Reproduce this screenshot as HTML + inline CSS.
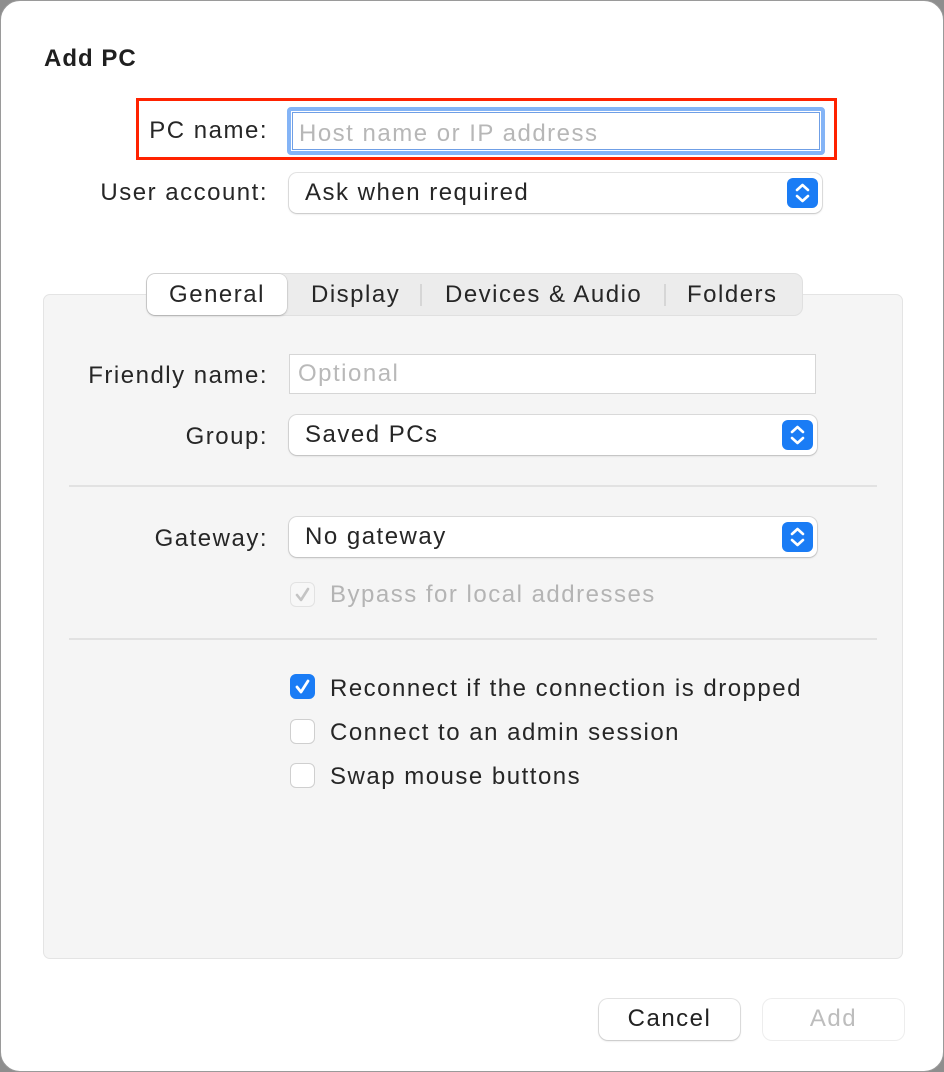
<!DOCTYPE html>
<html><head><style>
*{box-sizing:border-box;margin:0;padding:0}
html,body{width:944px;height:1072px;background:#8e8e8e;overflow:hidden;font-family:"Liberation Sans",sans-serif;color:#222}
.win{position:absolute;left:0;top:0;width:944px;height:1072px;background:#fff;border-radius:20px;border:1px solid #9a9a9a}
.a{position:absolute}
.s{letter-spacing:1.5px}
.lbl{position:absolute;font-size:24px;text-align:right;color:#262626;letter-spacing:1.5px}
.pop{position:absolute;background:#fff;border-radius:8px;box-shadow:0 0 0 1px rgba(0,0,0,.1),0 1px 2px rgba(0,0,0,.15);font-size:24px;padding-left:16px;line-height:40px;color:#262626;letter-spacing:1.5px}
.chev{position:absolute;right:4px;top:5px;width:31px;height:30px;background:#1a7cf5;border-radius:6px}
.tf{position:absolute;background:#fff;border:1px solid #d6d6d6;font-size:24px;padding-left:8px;color:#b9b9b9;letter-spacing:1.5px}
.cb{position:absolute;width:25px;height:25px;border-radius:6px;background:#fff;border:1px solid #cfcfcf}
.ct{position:absolute;font-size:24px;color:#262626;left:329px;letter-spacing:1.5px}
.sep{position:absolute;left:68px;width:808px;height:2px;background:#e2e2e2}
.btn{position:absolute;width:141px;height:41px;border-radius:9px;background:#fff;box-shadow:0 0 0 1px rgba(0,0,0,.1),0 1px 2px rgba(0,0,0,.15);font-size:24px;text-align:center;line-height:40px;letter-spacing:1.5px}
</style></head><body>
<div class="win">
<div class="a" style="left:43px;top:44px;font-size:24px;font-weight:bold;color:#1f1f1f;letter-spacing:1px">Add PC</div>
<div class="a" style="left:135px;top:97px;width:701px;height:62px;border:3px solid #ff2200"></div>
<div class="lbl" style="right:675px;top:116px">PC name:</div>
<div class="a" style="left:286px;top:106px;width:538px;height:48px;border:4px solid #84b4f6;border-radius:4px;background:#fff"><div style="position:absolute;left:1px;top:1px;right:1px;bottom:1px;border:1px solid #6f9fe6"></div><div style="position:absolute;left:8px;top:9px;font-size:24px;color:#b7b7b7;letter-spacing:1.5px">Host name or IP address</div></div>
<div class="lbl" style="right:675px;top:178px">User account:</div>
<div class="pop" style="left:288px;top:172px;width:533px;height:40px">Ask when required<div class="chev"><svg width="31" height="30" viewBox="0 0 31 30"><path d="M10 12l5.5-5 5.5 5M10 18l5.5 5 5.5-5" stroke="#fff" stroke-width="2.6" fill="none" stroke-linecap="round" stroke-linejoin="round"/></svg></div></div>

<div class="a" style="left:42px;top:293px;width:860px;height:665px;background:#f5f5f5;border:1px solid #e4e4e4;border-radius:7px"></div>
<div class="a" style="left:145px;top:272px;width:657px;height:43px;background:#ececec;border-radius:9px;border:1px solid #e0e0e0"></div>
<div class="a" style="left:146px;top:273px;width:140px;height:41px;background:#fff;border-radius:8px;box-shadow:0 1px 2px rgba(0,0,0,.2),0 0 0 .5px rgba(0,0,0,.1)"></div>
<div class="a s" style="left:146px;top:280px;width:140px;text-align:center;font-size:24px;color:#262626">General</div>
<div class="a s" style="left:310px;top:280px;font-size:24px;color:#262626">Display</div>
<div class="a" style="left:419px;top:283px;width:2px;height:22px;background:#d6d6d6"></div>
<div class="a s" style="left:444px;top:280px;font-size:24px;color:#262626">Devices &amp; Audio</div>
<div class="a" style="left:663px;top:283px;width:2px;height:22px;background:#d6d6d6"></div>
<div class="a s" style="left:686px;top:280px;font-size:24px;color:#262626">Folders</div>

<div class="lbl" style="right:675px;top:361px">Friendly name:</div>
<div class="tf" style="left:288px;top:353px;width:527px;height:40px;line-height:38px">Optional</div>
<div class="lbl" style="right:675px;top:422px">Group:</div>
<div class="pop" style="left:288px;top:414px;width:528px;height:40px">Saved PCs<div class="chev"><svg width="31" height="30" viewBox="0 0 31 30"><path d="M10 12l5.5-5 5.5 5M10 18l5.5 5 5.5-5" stroke="#fff" stroke-width="2.6" fill="none" stroke-linecap="round" stroke-linejoin="round"/></svg></div></div>
<div class="sep" style="top:484px"></div>
<div class="lbl" style="right:675px;top:524px">Gateway:</div>
<div class="pop" style="left:288px;top:516px;width:528px;height:40px">No gateway<div class="chev"><svg width="31" height="30" viewBox="0 0 31 30"><path d="M10 12l5.5-5 5.5 5M10 18l5.5 5 5.5-5" stroke="#fff" stroke-width="2.6" fill="none" stroke-linecap="round" stroke-linejoin="round"/></svg></div></div>
<div class="cb" style="left:289px;top:581px;background:#f7f7f7;border-color:#e2e2e2"><svg width="23" height="23" viewBox="0 0 23 23"><path d="M6 12l4 5 7-11" stroke="#c4c4c4" stroke-width="2.6" fill="none" stroke-linecap="round" stroke-linejoin="round"/></svg></div>
<div class="ct" style="top:580px;color:#b4b4b4">Bypass for local addresses</div>
<div class="sep" style="top:637px"></div>
<div class="cb" style="left:289px;top:673px;background:#1a7cf5;border-color:#1a7cf5"><svg width="23" height="23" viewBox="0 0 23 23"><path d="M6 12l4 5 7-11" stroke="#fff" stroke-width="2.8" fill="none" stroke-linecap="round" stroke-linejoin="round"/></svg></div>
<div class="ct" style="top:674px">Reconnect if the connection is dropped</div>
<div class="cb" style="left:289px;top:718px"></div>
<div class="ct" style="top:718px">Connect to an admin session</div>
<div class="cb" style="left:289px;top:762px"></div>
<div class="ct" style="top:762px">Swap mouse buttons</div>

<div class="btn" style="left:598px;top:998px;color:#222">Cancel</div>
<div class="btn" style="left:762px;top:998px;color:#bdbdbd;box-shadow:0 0 0 1px rgba(0,0,0,.07)">Add</div>
</div>
</body></html>
